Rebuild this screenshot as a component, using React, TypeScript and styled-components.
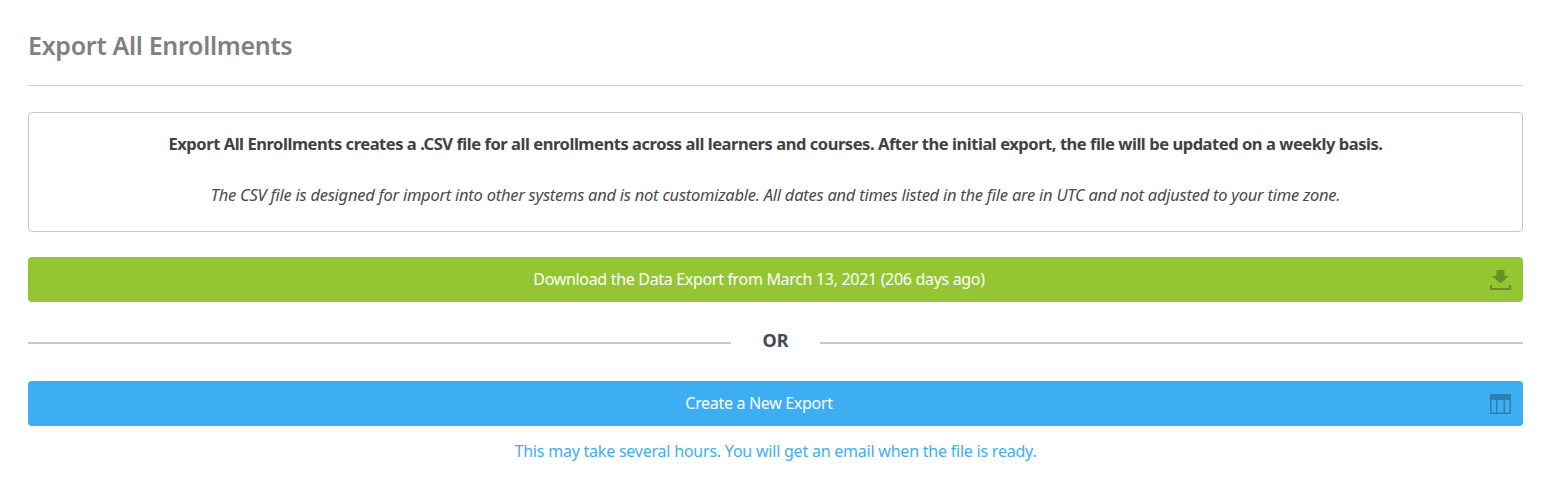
import React from "react";
import styled, { createGlobalStyle } from "styled-components";

const Global = createGlobalStyle`
  html, body { margin: 0; padding: 0; background: #fff; }
  body { font-family: "Noto Sans", "Open Sans", sans-serif; }
`;
const Page = styled.div`
  padding: 26px 33px 0 28px;
  display: flex;
  flex-direction: column;
`;
const Title = styled.h1`
  margin: 0;
  font-size: 25px;
  line-height: 38px;
  font-weight: 600;
  color: #808080;
  letter-spacing: -0.3px;
  padding-bottom: 21px;
  border-bottom: 1px solid #cfcfcf;
`;
const Notice = styled.div`
  margin-top: 26px;
  height: 120px;
  box-sizing: border-box;
  border: 1px solid #c8c8c8;
  border-radius: 4px;
  display: flex;
  flex-direction: column;
  align-items: center;
  padding-top: 20px;
`;
const Lead = styled.p`
  margin: 0;
  font-size: 16.5px;
  line-height: 22px;
  font-weight: 700;
  color: #414141;
  letter-spacing: -0.45px;
  white-space: nowrap;
`;
const Fine = styled.p`
  margin: 29px 0 0;
  font-size: 16.5px;
  line-height: 22px;
  font-style: italic;
  color: #4a4a4a;
  letter-spacing: -0.25px;
  white-space: nowrap;
`;
const ActionBar = styled.a<{ $bg: string; $gap: number }>`
  position: relative;
  display: flex;
  align-items: center;
  justify-content: center;
  box-sizing: border-box;
  height: 45px;
  padding: 0 33px 2px 0;
  margin-top: ${(p) => p.$gap}px;
  background: ${(p) => p.$bg};
  border-radius: 4px;
  color: #fff;
  font-size: 16px;
  letter-spacing: -0.32px;
`;
const BarIcon = styled.svg`
  position: absolute;
  right: 12px;
  top: 13px;
  width: 21px;
  height: 20px;
`;
const Divider = styled.div`
  display: flex;
  align-items: center;
  gap: 28px;
  height: 24px;
  margin-top: 27px;
`;
const Rule = styled.div`
  flex: 1;
  height: 2px;
  margin-top: 4px;
  background: #c8c8c8;
`;
const Or = styled.span`
  width: 33px;
  text-align: center;
  font-size: 18px;
  font-weight: 700;
  color: #414a55;
  padding-bottom: 2px;
`;
const Hint = styled.p`
  margin: 14px 0 0;
  text-align: center;
  font-size: 16px;
  line-height: 22px;
  color: #3daef2;
  letter-spacing: -0.22px;
`;

export default function App() {
  return (
    <Page>
      <Global />
      <Title>Export All Enrollments</Title>
      <Notice>
        <Lead>Export All Enrollments creates a .CSV file for all enrollments across all learners and courses. After the initial export, the file will be updated on a weekly basis.</Lead>
        <Fine>The CSV file is designed for import into other systems and is not customizable. All dates and times listed in the file are in UTC and not adjusted to your time zone.</Fine>
      </Notice>
      <ActionBar $bg="#93c632" $gap={25}>
        Download the Data Export from March 13, 2021 (206 days ago)
        <BarIcon viewBox="0 0 21 20">
          <path d="M6.500 0h8v6h4.500l-8.500 7.500L2 6h4.500z" fill="#6a8f25" />
          <path d="M0 15h2v3h17v-3h2v5H0z" fill="#6a8f25" />
        </BarIcon>
      </ActionBar>
      <Divider>
        <Rule />
        <Or>OR</Or>
        <Rule />
      </Divider>
      <ActionBar $bg="#3daef2" $gap={28}>
        Create a New Export
        <BarIcon viewBox="0 0 21 20">
          <path fillRule="evenodd" d="M0 0h21v20H0zM1.500 6v12.500h4.500V6zM7.500 6v12.500h6V6zM15 6v12.500h4.500V6z" fill="#2c7fb1" />
        </BarIcon>
      </ActionBar>
      <Hint>This may take several hours. You will get an email when the file is ready.</Hint>
    </Page>
  );
}
